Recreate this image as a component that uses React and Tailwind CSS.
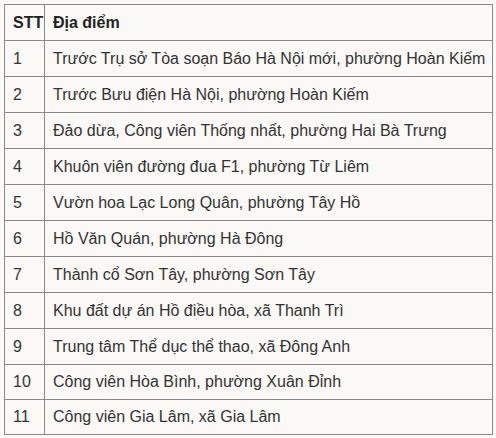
import React from 'react';

const rows = [
  ['1', 'Trước Trụ sở Tòa soạn Báo Hà Nội mới, phường Hoàn Kiếm'],
  ['2', 'Trước Bưu điện Hà Nội, phường Hoàn Kiếm'],
  ['3', 'Đảo dừa, Công viên Thống nhất, phường Hai Bà Trưng'],
  ['4', 'Khuôn viên đường đua F1, phường Từ Liêm'],
  ['5', 'Vườn hoa Lạc Long Quân, phường Tây Hồ'],
  ['6', 'Hồ Văn Quán, phường Hà Đông'],
  ['7', 'Thành cổ Sơn Tây, phường Sơn Tây'],
  ['8', 'Khu đất dự án Hồ điều hòa, xã Thanh Trì'],
  ['9', 'Trung tâm Thể dục thể thao, xã Đông Anh'],
  ['10', 'Công viên Hòa Bình, phường Xuân Đỉnh'],
  ['11', 'Công viên Gia Lâm, xã Gia Lâm'],
];

const App = () => {
  return (
    <div className="w-[496px] h-[438px] bg-[#faf9f5] p-1 font-['Liberation_Sans',Arial,sans-serif] text-[16px] text-[#333]">
      <table className="w-[489px] table-fixed border-collapse">
        <colgroup>
          <col className="w-[40px]" />
          <col />
        </colgroup>
        <thead>
          <tr className="h-[36px]">
            <th className="border border-[#888] px-2 text-left font-bold text-[#222]">STT</th>
            <th className="border border-[#888] px-2 text-left font-bold text-[#222]">Địa điểm</th>
          </tr>
        </thead>
        <tbody>
          {rows.map(([n, place], i) => (
            <tr key={n} className={i < 9 ? 'h-[36px]' : 'h-[35px]'}>
              <td className="border border-[#888] px-2 whitespace-nowrap">{n}</td>
              <td className="border border-[#888] px-2 whitespace-nowrap">{place}</td>
            </tr>
          ))}
        </tbody>
      </table>
    </div>
  );
};

export default App;
